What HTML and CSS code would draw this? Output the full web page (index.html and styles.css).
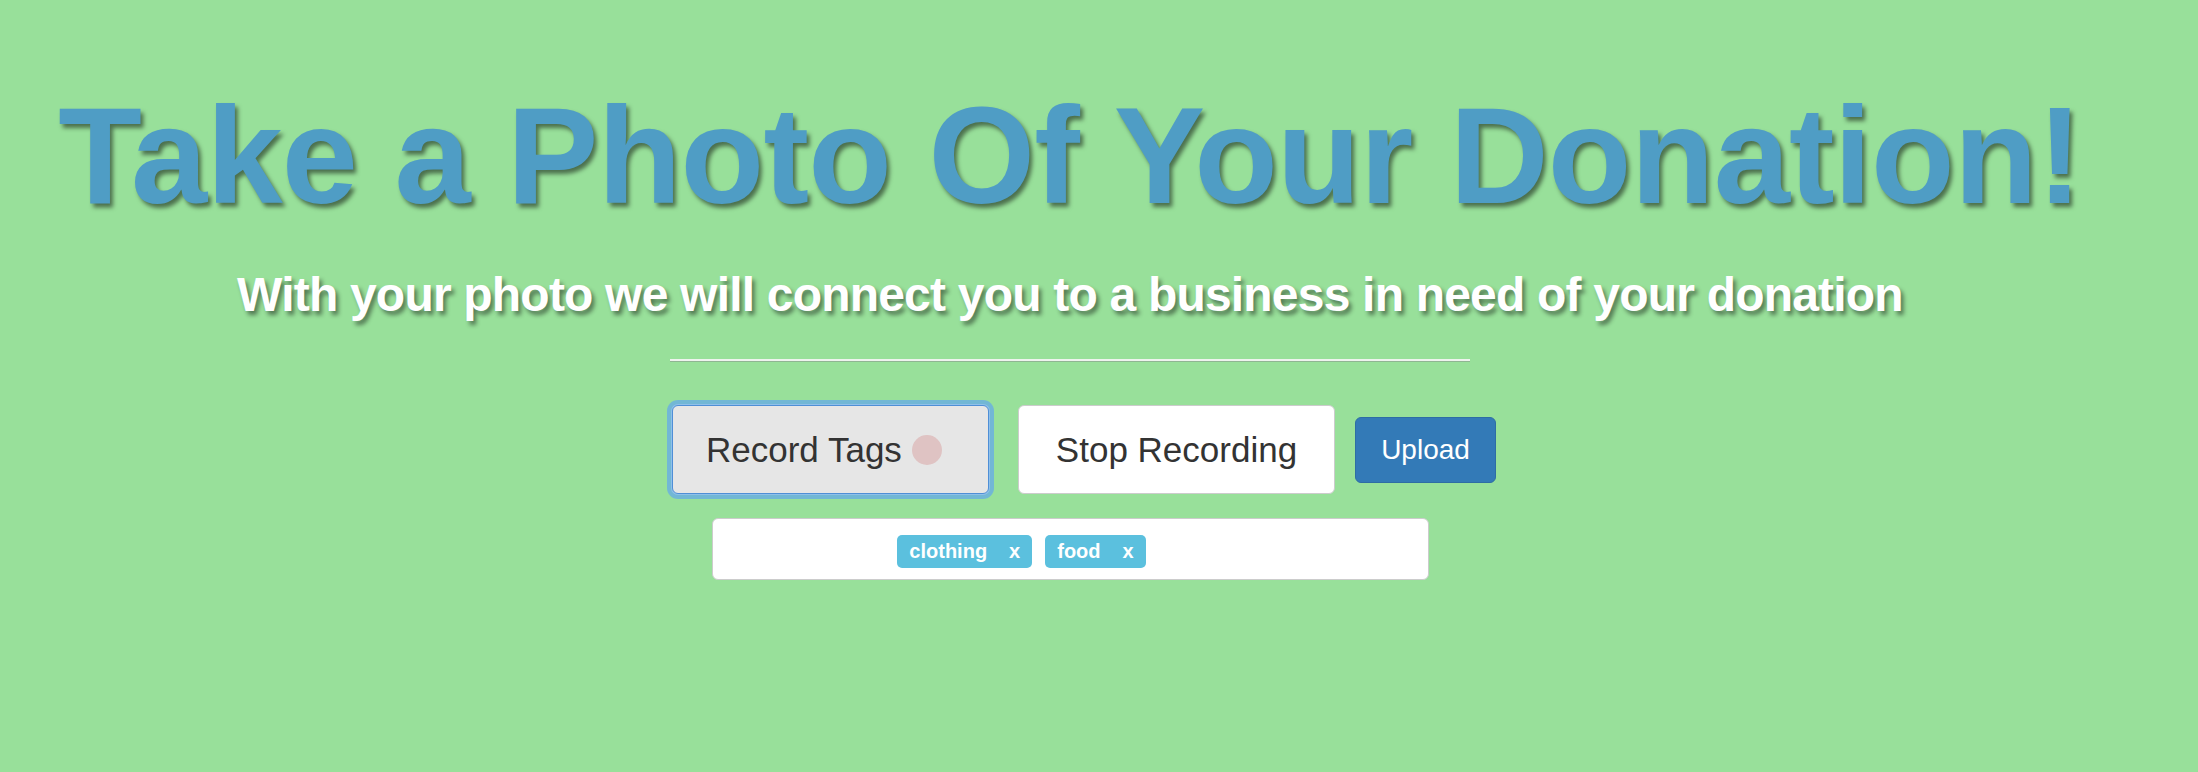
FILE: index.html
```html
<html>
<head>
<link rel="stylesheet" href="styles.css">
</head>
<body>

<div class="page">
  <h1 class="title">Take a Photo Of Your Donation!</h1>
  <h2 class="subtitle">With your photo we will connect you to a business in need of your donation</h2>

  <div class="panel">
    <hr class="divider">

    <div class="controls">
      <button class="btn btn-record" type="button">Record Tags <span class="rec-dot"></span></button>
      <button class="btn btn-stop" type="button">Stop Recording</button>
      <button class="btn btn-upload" type="button">Upload</button>
    </div>

    <div class="tags-input">
      <span class="tag">clothing<span class="tag-remove">x</span></span>
      <span class="tag">food<span class="tag-remove">x</span></span>
      <input class="tag-entry" type="text" value="">
    </div>
  </div>
</div>

</body>
</html>
```

FILE: styles.css
```css
body {
  margin: 0;
  background: #98e09a;
  font-family: "Liberation Sans", Arial, sans-serif;
}

.page {
  display: flex;
  flex-direction: column;
  align-items: center;
  padding: 87px 58px 0 0;
}

.title {
  margin: 0;
  font-size: 137px;
  line-height: 137px;
  font-weight: bold;
  letter-spacing: -0.8px;
  color: #4f9dc5;
  text-shadow: 3px 4px 4px rgba(0, 0, 0, 0.5);
  white-space: nowrap;
}

.subtitle {
  margin: 47px 0 0;
  font-size: 48px;
  line-height: 48px;
  font-weight: bold;
  letter-spacing: -0.8px;
  color: #fff;
  text-shadow: 3px 4px 4px rgba(0, 0, 0, 0.45);
  white-space: nowrap;
}

.panel {
  width: 800px;
  display: flex;
  flex-direction: column;
}

.divider {
  width: 100%;
  margin: 40px 0 0;
  border: 0;
  border-top: 2px solid #eef3ee;
  border-bottom: 1px solid #8fb592;
}

.controls {
  display: flex;
  align-items: center;
  margin: 43px 0 0 2px;
}

.btn {
  flex-shrink: 0;
  white-space: nowrap;
  font-family: "Liberation Sans", Arial, sans-serif;
  border: 1px solid #ccc;
  border-radius: 6px;
  cursor: pointer;
}

.btn-record,
.btn-stop {
  font-size: 35px;
  line-height: 46px;
  color: #333;
  height: 89px;
}

.btn-record {
  display: flex;
  align-items: center;
  padding: 20px 46px 20px 33px;
  background: #e6e6e6;
  border-color: #4f8fd6;
  box-shadow: 0 0 0 1px #8fc0ea, 0 0 0 5px rgba(102, 170, 232, 0.75);
}

.rec-dot {
  display: inline-block;
  width: 30px;
  height: 30px;
  margin-left: 10px;
  border-radius: 50%;
  background: #dfc3c3;
}

.btn-stop {
  margin-left: 29px;
  padding: 20px 37px;
  background: #fff;
}

.btn-upload {
  margin-left: 20px;
  padding: 14px 25px;
  font-size: 28px;
  line-height: 36px;
  color: #fff;
  background: #337ab7;
  border-color: #2e6da4;
}

.tags-input {
  box-sizing: border-box;
  width: 717px;
  height: 62px;
  margin: 24px auto 0;
  padding-top: 16px;
  display: flex;
  justify-content: center;
  align-items: flex-start;
  gap: 13px;
  background: #fff;
  border: 1px solid #ccc;
  border-radius: 6px;
}

.tag {
  padding: 6px 12px 7px;
  font-size: 20px;
  line-height: 20px;
  font-weight: bold;
  color: #fff;
  background: #5bc0de;
  border-radius: 5px;
}

.tag-remove {
  margin-left: 22px;
}

.tag-entry {
  width: 84px;
  border: 0;
  outline: none;
  background: transparent;
}
```
